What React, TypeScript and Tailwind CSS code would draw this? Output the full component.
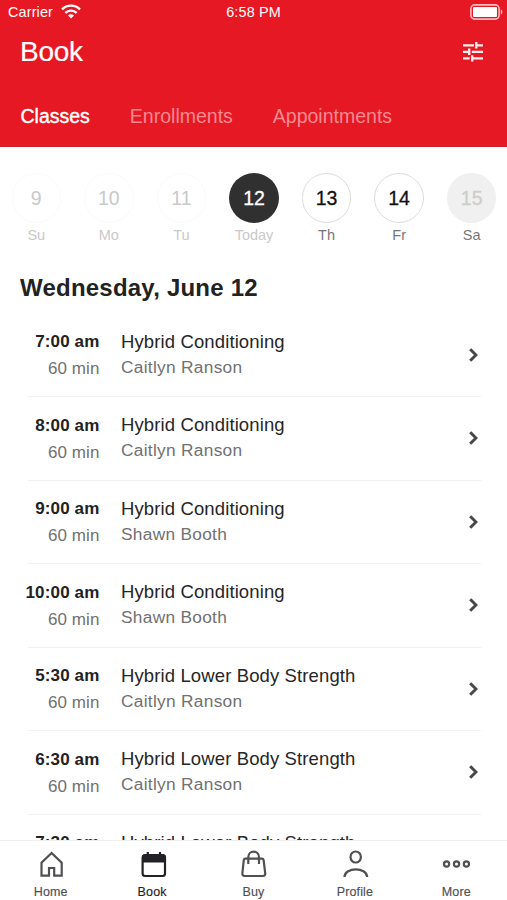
type ClassItem = {
  time: string;
  duration: string;
  name: string;
  coach: string;
};

const days = [
  { date: 9, label: "Su", state: "past" },
  { date: 10, label: "Mo", state: "past" },
  { date: 11, label: "Tu", state: "past" },
  { date: 12, label: "Today", state: "selected" },
  { date: 13, label: "Th", state: "open" },
  { date: 14, label: "Fr", state: "open" },
  { date: 15, label: "Sa", state: "closed" },
];

const circleStyles: Record<string, string> = {
  past: "border border-[#fbfbfb] text-[#c9c9c9]",
  selected: "bg-[#303030] text-white [-webkit-text-stroke:0.3px]",
  open: "border border-[#dcdcdc] text-[#111] [-webkit-text-stroke:0.3px]",
  closed: "bg-[#f0f0f0] text-[#cdcdcd] [-webkit-text-stroke:0.3px]",
};

const labelStyles: Record<string, string> = {
  past: "text-[#c9c9c9]",
  selected: "text-[#c9c9c9]",
  open: "text-[#777]",
  closed: "text-[#777]",
};

const classes: ClassItem[] = [
  { time: "7:00 am", duration: "60 min", name: "Hybrid Conditioning", coach: "Caitlyn Ranson" },
  { time: "8:00 am", duration: "60 min", name: "Hybrid Conditioning", coach: "Caitlyn Ranson" },
  { time: "9:00 am", duration: "60 min", name: "Hybrid Conditioning", coach: "Shawn Booth" },
  { time: "10:00 am", duration: "60 min", name: "Hybrid Conditioning", coach: "Shawn Booth" },
  { time: "5:30 am", duration: "60 min", name: "Hybrid Lower Body Strength", coach: "Caitlyn Ranson" },
  { time: "6:30 am", duration: "60 min", name: "Hybrid Lower Body Strength", coach: "Caitlyn Ranson" },
  { time: "7:30 am", duration: "60 min", name: "Hybrid Lower Body Strength", coach: "Caitlyn Ranson" },
];

const WifiIcon = () => (
  <svg width="20" height="15" viewBox="0 0 20 15" fill="none" stroke="white" strokeWidth="2.3">
    <path d="M1 5.4C6 0.4 14 0.4 19 5.4" />
    <path d="M4.3 8.9C7.5 5.8 12.5 5.8 15.7 8.9" />
    <path d="M10 14.4L7 11.4C8.7 9.9 11.3 9.9 13 11.4Z" fill="white" stroke="none" />
  </svg>
);

const BatteryIcon = () => (
  <svg width="33" height="16" viewBox="0 0 33 16" fill="none">
    <rect x="0.9" y="0.9" width="28.2" height="14.2" rx="3.8" stroke="#fbb9bd" strokeWidth="1.6" />
    <rect x="3" y="3" width="24" height="10" rx="1" fill="white" />
    <path d="M30.8 5.2C32.8 6.2 32.8 9.8 30.8 10.8Z" fill="#fbb9bd" />
  </svg>
);

const FilterIcon = () => (
  <svg width="20" height="20" viewBox="0 0 20 20" fill="none" stroke="#fff0f0" strokeWidth="2.3">
    <path d="M0 3.3H11M13.3 3.3H20M13.3 0V6.6" />
    <path d="M0 9.8H6.2M8.8 9.8H20M6.2 6.6V13" />
    <path d="M0 16.4H6.6M9.2 16.4H20M9.2 13.2V19.6" />
  </svg>
);

const HomeIcon = () => (
  <path d="M6.5 25.6V12.8L16.6 3L26.7 12.8V25.6H19.2V18H14V25.6Z" />
);

const BookIcon = () => (
  <>
    <rect x="6.6" y="5.2" width="22.4" height="20.8" rx="2.4" />
    <path d="M6 12.4V6.6C6 5 7 4.4 8.4 4.4H27.2C28.6 4.4 29.6 5 29.6 6.6V12.4Z" fill="currentColor" stroke="none" />
    <path d="M11.8 2V6M24 2V6" />
  </>
);

const BuyIcon = () => (
  <>
    <path d="M8.2 8.7H25C26 8.7 26.4 9.2 26.6 10L28.2 23.2C28.4 25 27.4 26 26 26H7.6C6 26 5.2 25 5.4 23.2L6.8 10C7 9.2 7.4 8.7 8.2 8.7Z" />
    <path d="M11.3 14V7C11.3 -0.2 22 -0.2 22 7V14" />
  </>
);

const ProfileIcon = () => (
  <>
    <ellipse cx="16.7" cy="7" rx="5.2" ry="5.5" />
    <path d="M5.4 27C6 16.8 27.6 16.8 28.2 27" />
  </>
);

const MoreIcon = () => (
  <>
    <circle cx="6.6" cy="14" r="2.6" />
    <circle cx="16.5" cy="14" r="2.6" />
    <circle cx="26.4" cy="14" r="2.6" />
  </>
);

const navItems = [
  { label: "Home", icon: HomeIcon },
  { label: "Book", icon: BookIcon, active: true },
  { label: "Buy", icon: BuyIcon },
  { label: "Profile", icon: ProfileIcon },
  { label: "More", icon: MoreIcon },
];

const Header = () => {
  return (
    <header className="h-[147px] shrink-0 border-b border-[#c9202b] bg-[#e61824] text-white">
      {/* Status bar */}
      <div className="grid h-6 grid-cols-[1fr_auto_1fr] items-center pr-[4px] pl-[8px] text-[14.4px] tracking-[0.15px]">
        <div className="flex items-center gap-[8px]">
          <span className="pt-[2px]">Carrier</span>
          <WifiIcon />
        </div>
        <span className="pt-px pr-[4px] text-center">6:58 PM</span>
        <div className="flex justify-end">
          <BatteryIcon />
        </div>
      </div>
      <div className="flex h-[56px] items-center justify-between pr-[24px] pl-[20px]">
        <h1 className="text-[28px] leading-[56px] tracking-[-0.3px] [-webkit-text-stroke:0.2px]">Book</h1>
        <FilterIcon />
      </div>
      <nav className="flex gap-[40px] pt-[20px] pl-[20.5px] text-[19.5px] leading-[32px]">
        <span className="[-webkit-text-stroke:0.4px]">Classes</span>
        <span className="text-[#f78a90]">Enrollments</span>
        <span className="text-[#f78a90]">Appointments</span>
      </nav>
    </header>
  );
};

const WeekStrip = () => {
  return (
    <div className="-mr-px grid shrink-0 grid-cols-7 pt-[26px]">
      {days.map((day) => (
        <div key={day.date} className="flex flex-col items-center">
          <div
            className={`flex size-[49.5px] items-center justify-center rounded-full pt-px text-[19.5px] ${circleStyles[day.state]}`}
          >
            {day.date}
          </div>
          <span className={`pt-[2.5px] text-[14.5px] leading-[20px] ${labelStyles[day.state]}`}>
            {day.label}
          </span>
        </div>
      ))}
    </div>
  );
};

const ClassRow = ({ time, duration, name, coach }: ClassItem) => {
  return (
    <li className="flex h-[83.5px] items-center border-b border-[#f1f1f1] pr-[3px]">
      <div className="-ml-2 w-[79.5px] pt-[2px] text-right text-[17px]">
        <p className="leading-[26px] font-bold tracking-[0.15px] text-[#222]">{time}</p>
        <p className="leading-[27px] tracking-[0.1px] text-[#717171]">{duration}</p>
      </div>
      <div className="ml-[21.5px] flex-1 pb-[2px]">
        <p className="text-[18.5px] leading-[27px] tracking-[0.12px] text-[#262626]">{name}</p>
        <p className="text-[17.3px] leading-[25px] tracking-[0.3px] text-[#717171]">{coach}</p>
      </div>
      <svg width="9" height="14" viewBox="0 0 9 14" fill="none" stroke="#484848" strokeWidth="3">
        <path d="M1.2 1.2L7 7L1.2 12.8" />
      </svg>
    </li>
  );
};

const TabBar = () => {
  return (
    <nav className="grid h-[60px] shrink-0 grid-cols-5 border-t border-[#efefef] bg-white pt-[9px]">
      {navItems.map(({ label, icon: Icon, active }) => (
        <div
          key={label}
          className={`flex flex-col items-center ${active ? "text-[#222226]" : "text-[#505053]"}`}
        >
          <svg width="32" height="28" viewBox="0 0 32 28" fill="none" stroke="currentColor" strokeWidth="2.2">
            <Icon />
          </svg>
          <span className="pt-[6px] text-[12.5px] leading-[16px] tracking-[0.15px] [-webkit-text-stroke:0.15px]">
            {label}
          </span>
        </div>
      ))}
    </nav>
  );
};

const App = () => {
  return (
    <div className="flex h-[900px] w-[507px] flex-col overflow-hidden bg-white font-['Liberation_Sans',Arial,sans-serif]">
      <Header />
      <WeekStrip />
      <h2 className="shrink-0 pt-[27px] pl-[20px] text-[24px] leading-[32px] font-bold tracking-[0.22px] text-[#222]">
        Wednesday, June 12
      </h2>
      <ul className="mt-[9.5px] min-h-0 flex-1 overflow-hidden pr-[26px] pl-[28px]">
        {classes.map((item) => (
          <ClassRow key={item.time} {...item} />
        ))}
      </ul>
      <TabBar />
    </div>
  );
};

export default App;
